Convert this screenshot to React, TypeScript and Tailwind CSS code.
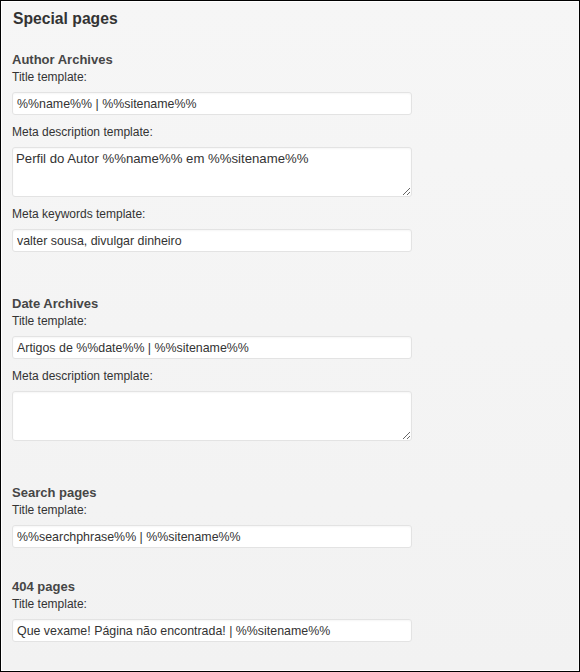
import React from "react";

const font = { fontFamily: '"Liberation Sans", Arial, sans-serif' };

function Label({ children, className = "" }: { children: React.ReactNode; className?: string }) {
  return <div className={`text-[12px] leading-[16px] text-[#333] ${className}`}>{children}</div>;
}

function Input({ value, className = "" }: { value: string; className?: string }) {
  return (
    <input
      readOnly
      value={value}
      className={`block w-[400px] h-[23px] rounded-[3px] border border-[#e3e3e3] bg-white px-[4px] text-[12.4px] text-[#333] outline-none shadow-[inset_0_1px_2px_rgba(0,0,0,0.04)] ${className}`}
      style={font}
    />
  );
}

function Area({ value, className = "" }: { value: string; className?: string }) {
  return (
    <textarea
      readOnly
      value={value}
      className={`block w-[400px] h-[50px] rounded-[3px] border border-[#e3e3e3] bg-white px-[3px] py-[2px] text-[13.2px] leading-[17px] text-[#333] outline-none resize-y shadow-[inset_0_1px_2px_rgba(0,0,0,0.04)] ${className}`}
      style={font}
    />
  );
}

function H({ children, className = "" }: { children: React.ReactNode; className?: string }) {
  return <div className={`text-[13px] leading-[17px] font-bold text-[#464646] ${className}`}>{children}</div>;
}

export default function App() {
  return (
    <div
      className="w-[580px] h-[672px] border border-black bg-gradient-to-b from-[#f6f6f6] to-[#f2f2f2] overflow-hidden"
      style={font}
    >
      <div className="h-full border border-white border-r-[#fafafa] pl-[10px] pt-[7px]">
        <div className="text-[15.7px] leading-[20px] font-bold text-[#333] pl-[1px]">Special pages</div>

        <H className="mt-[22px]">Author Archives</H>
        <Label className="mt-[1px]">Title template:</Label>
        <Input className="mt-[7px]" value="%%name%% | %%sitename%%" />
        <Label className="mt-[9px]">Meta description template:</Label>
        <Area className="mt-[7px]" value="Perfil do Autor %%name%% em %%sitename%%" />
        <Label className="mt-[9px]">Meta keywords template:</Label>
        <Input className="mt-[7px]" value="valter sousa, divulgar dinheiro" />

        <H className="mt-[43px]">Date Archives</H>
        <Label className="mt-[1px]">Title template:</Label>
        <Input className="mt-[7px]" value="Artigos de %%date%% | %%sitename%%" />
        <Label className="mt-[9px]">Meta description template:</Label>
        <Area className="mt-[7px]" value="" />

        <H className="mt-[43px]">Search pages</H>
        <Label className="mt-[1px]">Title template:</Label>
        <Input className="mt-[7px]" value="%%searchphrase%% | %%sitename%%" />

        <H className="mt-[30px]">404 pages</H>
        <Label className="mt-[1px]">Title template:</Label>
        <Input className="mt-[7px]" value="Que vexame! Página não encontrada! | %%sitename%%" />
      </div>
    </div>
  );
}
